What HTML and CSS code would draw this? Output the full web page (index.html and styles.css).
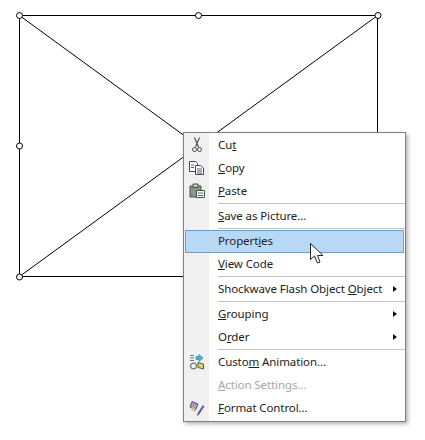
FILE: index.html
```html
<!DOCTYPE html>
<html>
<head>
<meta charset="utf-8">
<title>Control</title>
<link rel="stylesheet" href="styles.css">
</head>
<body>

<svg class="canvas" width="425" height="440" viewBox="0 0 425 440">
	<rect x="19.5" y="15.5" width="358" height="261" fill="#fff" stroke="#000"/>
	<line x1="19.5" y1="15.5" x2="377.5" y2="276.5" stroke="#000"/>
	<line x1="377.5" y1="15.5" x2="19.5" y2="276.5" stroke="#000"/>
	<g fill="#fff" stroke="#000">
		<circle cx="19.5" cy="15.5" r="3"/>
		<circle cx="198.5" cy="15.5" r="3"/>
		<circle cx="378" cy="15.5" r="3"/>
		<circle cx="19.5" cy="146" r="3"/>
		<circle cx="19.5" cy="277" r="3"/>
	</g>
</svg>

<ul class="menu">
	<li class="item">
		<svg class="icon" viewBox="0 0 16 16" fill="none" stroke="#3f4a58">
			<path d="M5.5 0.5L9.5 10M10.5 0.5L6.5 10" stroke-width="1.1"/>
			<circle cx="5.5" cy="12.5" r="2"/>
			<circle cx="10.5" cy="12.5" r="2"/>
		</svg>
		<span>Cu<u>t</u></span>
	</li>
	<li class="item">
		<svg class="icon" viewBox="0 0 16 16" stroke="#3f4a58">
			<path d="M0.5 1.5H6.5L8.5 3.5V11.5H0.5Z" fill="#fff"/>
			<path d="M6.5 5.5H11.5L14.5 8V14.5H6.5Z" fill="#fff"/>
			<path d="M2 5H5M2 7.5H5M8 9H13M8 11H13M8 13H13" stroke-width="0.9"/>
		</svg>
		<span><u>C</u>opy</span>
	</li>
	<li class="item">
		<svg class="icon" viewBox="0 0 16 16" stroke="#46524a">
			<path d="M1 3H12V14H1Z" fill="#8d9682"/>
			<path d="M4 1H9V4.5H4Z" fill="#c8ccc0"/>
			<path d="M7.5 7.5H15.5V14.5H7.5Z" fill="#fff"/>
			<path d="M9 10H14M9 12.5H14" stroke-width="0.9"/>
		</svg>
		<span><u>P</u>aste</span>
	</li>
	<li class="sep"></li>
	<li class="item"><span class="blank"></span><span><u>S</u>ave as Picture...</span></li>
	<li class="sep"></li>
	<li class="item active"><span class="blank"></span><span>Propert<u>i</u>es</span></li>
	<li class="item"><span class="blank"></span><span><u>V</u>iew Code</span></li>
	<li class="sep"></li>
	<li class="item"><span class="blank"></span><span>Shockwave Flash Object <u>O</u>bject</span><i class="arrow"></i></li>
	<li class="sep"></li>
	<li class="item"><span class="blank"></span><span><u>G</u>rouping</span><i class="arrow"></i></li>
	<li class="item"><span class="blank"></span><span>O<u>r</u>der</span><i class="arrow"></i></li>
	<li class="sep"></li>
	<li class="item">
		<svg class="icon" viewBox="0 0 16 16" fill="none">
			<path d="M1 1.5H5M1 4H5M1 6.5H5" stroke="#6a7480"/>
			<path d="M7 2.5H10V0.5L14 4L10 7.5V5.5H7Z" fill="#3fb6d8" stroke="#2a7f9c" stroke-width="0.6"/>
			<circle cx="4.5" cy="12" r="3" stroke="#4a4f55"/>
			<path d="M9 8.5L14.5 10V15L9 13.5Z" fill="#e4d27a" stroke="#5c5a40"/>
		</svg>
		<span>Custo<u>m</u> Animation...</span>
	</li>
	<li class="item disabled"><span class="blank"></span><span><u>A</u>ction Settings...</span></li>
	<li class="item">
		<svg class="icon" viewBox="0 0 16 16">
			<path d="M3 1.5L9 4L6.5 10L1 7Z" fill="#a99ac4" stroke="#5a5070"/>
			<path d="M3 7L7 9.5L6 12L2 9.5Z" fill="#d8c27a"/>
			<path d="M15 6.5L10 14L8.5 15.5L9 13L14 5.5Z" fill="#5a62b8" stroke="#3a3f80" stroke-width="0.6"/>
		</svg>
		<span><u>F</u>ormat Control...</span>
	</li>
</ul>

<svg class="pointer" width="14" height="22" viewBox="0 0 14 22">
	<path d="M0.5 0.5V16.5L4.5 13L7.5 20L10 19L7.5 12.5H13Z" fill="#fff" stroke="#222"/>
</svg>

</body>
</html>
```

FILE: styles.css
```css
body { margin: 0; padding: 0; background-color: #fff; color: #222; font: normal 11.5px/23px 'Noto Sans', sans-serif; letter-spacing: -0.1px; }
.canvas { display: block; }
.menu { position: absolute; left: 183px; top: 132px; width: 221px; margin: 0; padding: 1px 0; list-style: none; background: linear-gradient(to right, #f0f0f0 25px, #fff 25px); border: 1px solid #808080; box-shadow: 2px 2px 4px rgba(0,0,0,0.3); }
.item { display: flex; align-items: center; height: 23px; padding: 0 0 2px 5px; box-sizing: border-box; }
.icon { width: 16px; height: 16px; margin-right: 13px; flex: none; }
.blank { width: 16px; margin-right: 13px; flex: none; }
.sep { height: 1px; margin: 0 0 1px 34px; background-color: #c4c4c4; }
.sep:first-of-type { margin-bottom: 0; }
.active { margin: 0 1px; padding: 0 0 2px 3px; background-color: #b8d9f6; border: 1px solid #5fa2da; }
.disabled { color: #a6a6a6; }
.arrow { width: 0; height: 0; margin-left: auto; margin-right: 8px; border-left: 4px solid #111; border-top: 3.5px solid transparent; border-bottom: 3.5px solid transparent; }
.pointer { position: absolute; left: 310px; top: 243px; }
```
